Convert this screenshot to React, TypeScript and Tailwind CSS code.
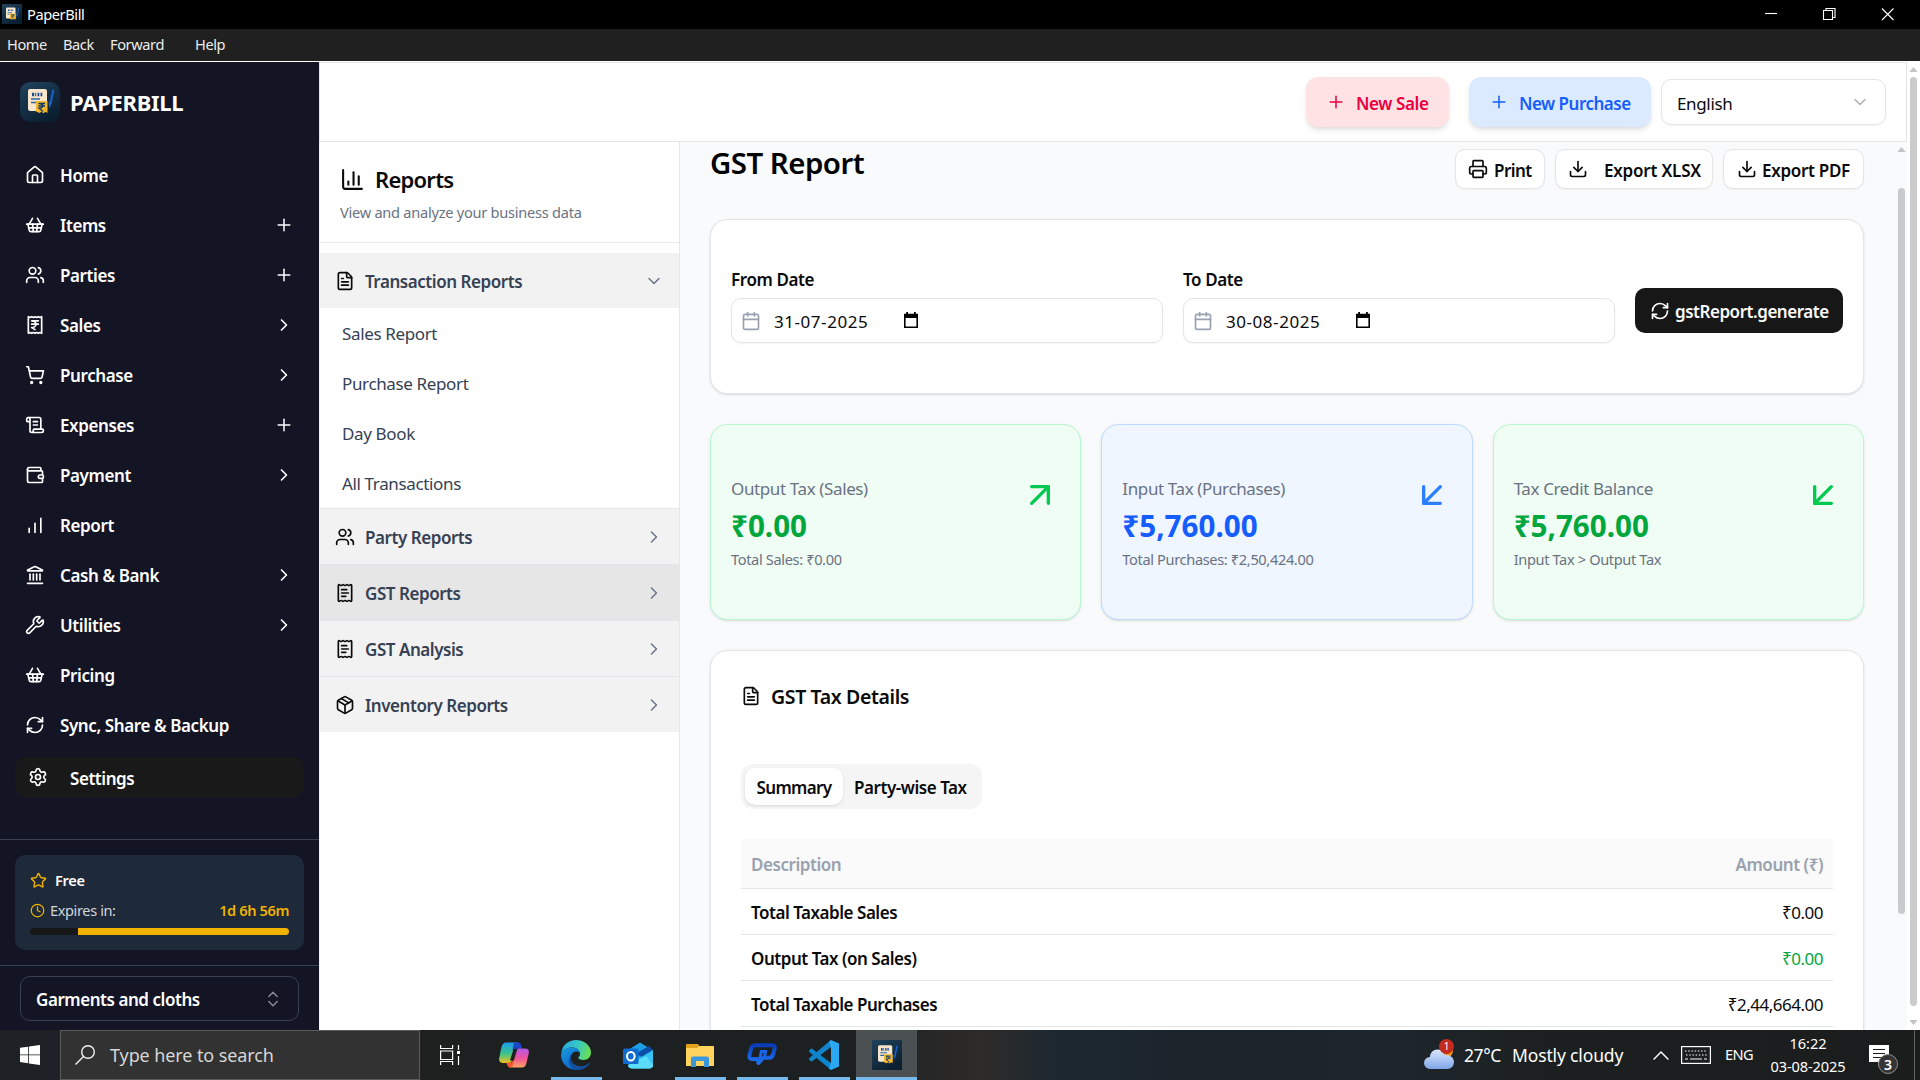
import type { ReactNode } from "react";
import {
  ArrowDownLeft,
  ArrowUpRight,
  Calendar,
  ChartColumn,
  ChevronDown,
  ChevronRight,
  ChevronsUpDown,
  Clock,
  Download,
  FileText,
  House,
  Landmark,
  Package,
  Plus,
  Printer,
  ReceiptIndianRupee,
  ReceiptText,
  RefreshCw,
  ScrollText,
  Settings,
  ShoppingBasket,
  ShoppingCart,
  Star,
  Users,
  Wallet,
  Wrench,
  type LucideIcon,
} from "lucide-react";

function BarsIcon() {
  return (
    <svg viewBox="0 0 24 24" className="size-5" fill="none" stroke="currentColor" strokeWidth="2" strokeLinecap="round">
      <path d="M5 21v-5M12 21V10M19 21V4" />
    </svg>
  );
}

function AppLogo({ className }: { className: string }) {
  return (
    <svg viewBox="0 0 40 40" className={className}>
      <defs>
        <linearGradient id="logoBg" x1="0" y1="0" x2="0.6" y2="1">
          <stop offset="0" stopColor="#21435c" />
          <stop offset="1" stopColor="#0a1f30" />
        </linearGradient>
      </defs>
      <rect width="40" height="40" fill="url(#logoBg)" />
      <path d="M10 7h15a2 2 0 0 1 2 2v20H10.500a2.500 2.500 0 0 1-2.500-2.500V9a2 2 0 0 1 2-2z" fill="#f7e6cb" />
      <path d="M12 12.500h2.200M15.200 12.500h1M17.500 12.500h1.800M20.500 12.500h1.800" stroke="#1d4f91" strokeWidth="3.400" />
      <path d="M11 17h9M11 20.500h5" stroke="#2a65ad" strokeWidth="1.400" />
      <path d="M32.500 7l1.800 1.500-2.600 13-2.600 5-.4-5.500z" fill="#1e5fc0" />
      <path d="M31.500 9l-2 11" stroke="#0c3170" strokeWidth="1" />
      <path d="M16 19h11.500v12l-2-1.200-2 1.400-2-1.400-2 1.200-3.500-1.500z" fill="#f4b62c" />
      <path d="M18.500 21.500h6.500M18.500 24h6.500M19 21.500c5 0 5 4.600 0 4.600l4 3.400" fill="none" stroke="#123a66" strokeWidth="1.300" />
    </svg>
  );
}

const nav: { label: string; icon: LucideIcon | typeof BarsIcon; end?: "plus" | "chevron" }[] = [
  { label: "Home", icon: House },
  { label: "Items", icon: ShoppingBasket, end: "plus" },
  { label: "Parties", icon: Users, end: "plus" },
  { label: "Sales", icon: ReceiptIndianRupee, end: "chevron" },
  { label: "Purchase", icon: ShoppingCart, end: "chevron" },
  { label: "Expenses", icon: ScrollText, end: "plus" },
  { label: "Payment", icon: Wallet, end: "chevron" },
  { label: "Report", icon: BarsIcon },
  { label: "Cash & Bank", icon: Landmark, end: "chevron" },
  { label: "Utilities", icon: Wrench, end: "chevron" },
  { label: "Pricing", icon: ShoppingBasket },
  { label: "Sync, Share & Backup", icon: RefreshCw },
];

function Sidebar() {
  return (
    <aside className="flex w-[319px] shrink-0 flex-col bg-[#131424] text-white">
      <div className="flex h-[88px] items-center gap-[10px] pt-5 pb-7 pl-5">
        <AppLogo className="size-10 rounded-[10px]" />
        <span className="text-[22px] font-bold tracking-[-0.3px]">PAPERBILL</span>
      </div>
      <nav className="flex h-[690px] flex-col">
        {nav.map(({ label, icon: Icon, end }) => (
          <div key={label} className="flex h-[50px] items-center pr-[25px] pl-[25px]">
            <Icon className="size-5" />
            <span className="ml-[15px] flex-1 pt-[2px] text-[17px] font-semibold tracking-[-0.4px]">{label}</span>
            {end === "plus" && <Plus className="size-5" strokeWidth={1.8} />}
            {end === "chevron" && <ChevronRight className="size-5" strokeWidth={2} />}
          </div>
        ))}
        <div className="mx-[15px] mt-[7px] flex h-10 items-center rounded-[10px] bg-[#191919] pl-[13px]">
          <Settings className="size-5" />
          <span className="ml-[22px] pt-[3px] text-[17px] font-semibold tracking-[-0.45px]">Settings</span>
        </div>
      </nav>
      <div className="mt-[-1px] h-[127px] border-y border-[#364153] px-[15px] pt-[15px]">
        <div className="h-[95px] rounded-[10px] bg-[#1e2939] px-[15px] pt-[13px]">
          <div className="flex h-[24px] items-center gap-[8px]">
            <Star className="size-[17px] text-[#f0b100]" />
            <span className="pt-[2px] text-[14.6px] font-semibold tracking-[-0.35px]">Free</span>
          </div>
          <div className="mt-[6px] flex h-6 items-center">
            <Clock className="size-[15px] text-[#f0b100]" />
            <span className="ml-[5px] flex-1 pt-[2px] text-[14.6px] tracking-[-0.4px] text-[#d1d5dc]">Expires in:</span>
            <span className="pt-[2px] text-[14.6px] font-semibold tracking-[-0.4px] text-[#f0b100]">1d 6h 56m</span>
          </div>
          <div className="mt-[6px] flex h-[7px] overflow-hidden rounded-full bg-[#171717]">
            <div className="ml-[48px] flex-1 bg-[#f0b100]" />
          </div>
        </div>
      </div>
      <div className="px-5 pt-[10px]">
        <div className="flex h-[45px] items-center justify-between rounded-[10px] border border-[#364153] pr-[15px] pl-[15px]">
          <span className="pt-[2px] text-[17px] font-semibold tracking-[-0.45px]">Garments and cloths</span>
          <ChevronsUpDown className="size-5 text-[#8b8c94]" strokeWidth={1.7} />
        </div>
      </div>
    </aside>
  );
}

function Header() {
  return (
    <header className="flex h-20 shrink-0 items-center justify-end border border-[#e5e5e5] bg-white pr-5">
      <button className="flex h-[50px] w-[143px] items-center rounded-[12px] bg-[#ffe2e4] pl-[20px] text-[#ec003f] shadow-md">
        <Plus className="size-5" strokeWidth={1.8} />
        <span className="ml-[10px] pt-[3px] text-[17px] font-semibold tracking-[-0.4px]">New Sale</span>
      </button>
      <button className="ml-5 flex h-[50px] w-[182px] items-center rounded-[12px] bg-[#dbeafe] pl-[20px] text-[#155dfc] shadow-md">
        <Plus className="size-5" strokeWidth={1.8} />
        <span className="ml-[10px] pt-[3px] text-[17px] font-semibold tracking-[-0.5px]">New Purchase</span>
      </button>
      <button className="ml-[10px] flex h-[46px] w-[225px] items-center justify-between rounded-[10px] border border-[#e5e5e5] bg-white pr-[15px] pl-[15px] text-[#0a0a0a] shadow-xs">
        <span className="pt-[3px] text-[17px] tracking-[-0.35px]">English</span>
        <ChevronDown className="size-5 text-[#b0b0b0]" strokeWidth={1.8} />
      </button>
    </header>
  );
}

function GroupRow({ icon: Icon, label, open, className }: { icon: LucideIcon; label: string; open?: boolean; className: string }) {
  const Arrow = open ? ChevronDown : ChevronRight;
  return (
    <div className={`flex items-center pr-[15px] pl-[15px] ${className}`}>
      <Icon className="size-5 text-[#0a0a0a]" />
      <span className="ml-[10px] flex-1 pt-[2px] text-[17px] font-semibold tracking-[-0.45px] text-[#364153]">{label}</span>
      <Arrow className="size-5 text-[#6a7282]" strokeWidth={1.7} />
    </div>
  );
}

function ReportsPanel() {
  return (
    <section className="w-[361px] shrink-0 border-r border-l border-r-[#e5e7eb] border-l-[#f2f2f2] bg-white">
      <div className="h-[101px] border-b border-[#e5e7eb] pl-5">
        <div className="flex items-center gap-[10px] pt-[23px]">
          <ChartColumn className="size-[25px] text-[#0a0a0a]" />
          <span className="-mt-px text-[22px] leading-[30px] font-semibold tracking-[-0.75px] text-[#0a0a0a]">Reports</span>
        </div>
        <p className="mt-[8px] text-[14.6px] leading-5 tracking-[-0.26px] text-[#6a7282]">View and analyze your business data</p>
      </div>
      <GroupRow icon={FileText} label="Transaction Reports" open className="mt-[10px] h-[55px] bg-[#f2f2f2]" />
      <div className="h-[200px]">
        {["Sales Report", "Purchase Report", "Day Book", "All Transactions"].map((t) => (
          <div key={t} className="flex h-[50px] items-center pt-[2px] pl-[22px] text-[17px] tracking-[-0.36px] text-[#364153]">
            {t}
          </div>
        ))}
      </div>
      <GroupRow icon={Users} label="Party Reports" className="h-14 border-t border-[#e5e7eb] bg-[#f2f2f2]" />
      <GroupRow icon={ReceiptText} label="GST Reports" className="h-14 border-t border-[#e5e7eb] bg-[#e6e6e6]" />
      <GroupRow icon={ReceiptText} label="GST Analysis" className="h-14 border-t border-[#e5e7eb] bg-[#f2f2f2]" />
      <GroupRow icon={Package} label="Inventory Reports" className="h-14 border-t border-[#e5e7eb] bg-[#f2f2f2]" />
    </section>
  );
}

function OutlineButton({ icon: Icon, children, className }: { icon: LucideIcon; children: ReactNode; className: string }) {
  return (
    <button className={`flex h-10 items-center rounded-[10px] border border-[#e5e5e5] bg-white text-[17px] font-semibold text-[#0a0a0a] shadow-xs ${className}`}>
      <Icon className="size-5" />
      <span className="pt-[3px]">{children}</span>
    </button>
  );
}

function DateGlyph() {
  return (
    <svg viewBox="0 0 14 16" className="-mt-[2px] h-4 w-[14px]">
      <path d="M0.8 3.5h12.400v11.700H.8z" fill="none" stroke="#000" strokeWidth="1.600" />
      <path d="M0 1.700h14V6H0zM2.200 0h1.800v2H2.200zM10 0h1.800v2H10z" fill="#000" />
    </svg>
  );
}

function DateField({ label, value }: { label: string; value: string }) {
  return (
    <div className="w-[432px]">
      <div className="text-[17px] leading-[26px] font-semibold tracking-[-0.4px] text-[#0a0a0a]">{label}</div>
      <div className="mt-[5px] flex h-[45px] items-center rounded-[10px] border border-[#e5e5e5] pl-[9px] shadow-xs">
        <Calendar className="size-5 text-[#99a1af]" />
        <span className="ml-[13px] w-[130px] pt-[2px] text-[17px] tracking-[0.55px] text-[#0a0a0a]">{value}</span>
        <DateGlyph />
      </div>
    </div>
  );
}

function StatCard({ label, value, note, icon: Icon, card, valueColor, iconColor }: {
  label: string; value: string; note: string; icon: LucideIcon; card: string; valueColor: string; iconColor: string;
}) {
  return (
    <div className={`flex h-[196px] items-start justify-between rounded-[17.5px] border pt-[50px] pr-[20px] pl-5 shadow-sm ${card}`}>
      <div>
        <div className="mt-px text-[17px] leading-[26px] tracking-[-0.38px] text-[#6a7282]">{label}</div>
        <div className={`mt-[4px] text-[29.6px] leading-[40px] font-bold ${valueColor}`}>{value}</div>
        <div className="mt-[3px] text-[14.6px] leading-5 tracking-[-0.36px] text-[#6a7282]">{note}</div>
      </div>
      <Icon className={`size-10 ${iconColor}`} />
    </div>
  );
}

const rows = [
  { name: "Total Taxable Sales", amount: "₹0.00", color: "text-[#0a0a0a]" },
  { name: "Output Tax (on Sales)", amount: "₹0.00", color: "text-[#00a63e]" },
  { name: "Total Taxable Purchases", amount: "₹2,44,664.00", color: "text-[#0a0a0a]" },
];

function Report() {
  return (
    <main className="h-full flex-1 overflow-hidden bg-[#f9fafb] pr-[43px] pl-[30px]">
      <div className="flex h-[77px] justify-between pt-[7px]">
        <h1 className="-mt-px text-[29.4px] leading-[30px] font-semibold tracking-[-0.5px] text-black">GST Report</h1>
        <div className="flex gap-[10px]">
          <OutlineButton icon={Printer} className="w-[90px] gap-[6px] pl-[12px] tracking-[-0.55px]">Print</OutlineButton>
          <OutlineButton icon={Download} className="w-[158px] gap-[16px] pl-[12px] tracking-[-0.2px]">Export XLSX</OutlineButton>
          <OutlineButton icon={Download} className="w-[141px] gap-[5px] pl-[13px] tracking-[-0.3px]">Export PDF</OutlineButton>
        </div>
      </div>
      <div className="flex h-[175px] gap-5 rounded-[17.5px] border border-[#e5e5e5] bg-white pt-[47px] pl-5 shadow-sm">
        <DateField label="From Date" value="31-07-2025" />
        <DateField label="To Date" value="30-08-2025" />
        <button className="mt-[21px] flex h-[45px] w-[208px] items-center gap-[5px] rounded-[10px] bg-[#171717] pl-[15px] text-[17px] font-semibold tracking-[-0.47px] text-[#fafafa]">
          <RefreshCw className="size-5" />
          <span className="pt-[2px]">gstReport.generate</span>
        </button>
      </div>
      <div className="mt-[30px] grid grid-cols-3 gap-5">
        <StatCard label="Output Tax (Sales)" value="₹0.00" note="Total Sales: ₹0.00" icon={ArrowUpRight} card="border-[#b9f8cf] bg-[#f0fdf4]" valueColor="text-[#00a63e]" iconColor="text-[#00c950]" />
        <StatCard label="Input Tax (Purchases)" value="₹5,760.00" note="Total Purchases: ₹2,50,424.00" icon={ArrowDownLeft} card="border-[#bedbff] bg-[#eff6ff]" valueColor="text-[#155dfc]" iconColor="text-[#2b7fff]" />
        <StatCard label="Tax Credit Balance" value="₹5,760.00" note="Input Tax > Output Tax" icon={ArrowDownLeft} card="border-[#b9f8cf] bg-[#f0fdf4]" valueColor="text-[#00a63e]" iconColor="text-[#00c950]" />
      </div>
      <div className="mt-[30px] h-[560px] rounded-[17.5px] border border-[#e5e5e5] bg-white px-[30px] pt-[30px] shadow-sm">
        <div className="flex h-[30px] items-center gap-[10px]">
          <FileText className="size-5 text-[#0a0a0a]" />
          <span className="pt-[2px] text-[19.5px] font-semibold tracking-[-0.37px] text-[#0a0a0a]">GST Tax Details</span>
        </div>
        <div className="mt-[53px] flex h-[45px] w-[241px] items-center rounded-[12px] bg-[#f5f5f5] pl-1 text-[17px] font-semibold text-[#0a0a0a]">
          <div className="flex h-[37px] w-[98px] items-center justify-center rounded-[10px] bg-white pt-[2px] tracking-[-0.65px] shadow-sm">Summary</div>
          <div className="flex-1 pt-[2px] pl-[11px] tracking-[-0.45px]">Party-wise Tax</div>
        </div>
        <div className="mt-[30px] flex h-[50px] items-center justify-between border-b border-[#e5e5e5] bg-[#fafafa] px-[10px] pt-[2px] text-[17px] font-semibold tracking-[-0.45px] text-[#99a1af]">
          <span>Description</span>
          <span>Amount (₹)</span>
        </div>
        {rows.map((r) => (
          <div key={r.name} className="flex h-[46px] items-center justify-between border-b border-[#e5e5e5] px-[10px] pt-[2px] text-[17px]">
            <span className="font-semibold tracking-[-0.47px] text-[#0a0a0a]">{r.name}</span>
            <span className={`tracking-[-0.5px] ${r.color}`}>{r.amount}</span>
          </div>
        ))}
      </div>
    </main>
  );
}

function ScrollArrow({ down }: { down?: boolean }) {
  return (
    <svg viewBox="0 0 10 6" className="h-[5px] w-[9px]">
      <path d={down ? "M0 0h10L5 6z" : "M0 6h10L5 0z"} fill="#c4c4c4" />
    </svg>
  );
}

function CopilotIcon() {
  return (
    <svg viewBox="0 0 30 26" className="h-[26px] w-[30px]">
      <defs>
        <linearGradient id="cpA" x1="0" y1="0" x2="0" y2="1">
          <stop offset="0" stopColor="#1b9df0" />
          <stop offset=".55" stopColor="#3cc38a" />
          <stop offset="1" stopColor="#f0c31c" />
        </linearGradient>
        <linearGradient id="cpB" x1="0" y1="0" x2="0" y2="1">
          <stop offset="0" stopColor="#b05ae8" />
          <stop offset=".5" stopColor="#f0529c" />
          <stop offset="1" stopColor="#ffa25e" />
        </linearGradient>
      </defs>
      <path d="M7 .5h12L12.500 19.500c-.6 1.500-1.200 1.500-2.500 1.500H4c-3 0-4.500-2-3.700-5.500L2.500 5C3.300 2 4.800.5 7 .5z" fill="url(#cpA)" />
      <path d="M15 .5h4.500c1.700 0 2.400 1.200 2.900 3.500l.8 2.500h-4.500c-1.700 0-2.300.8-2.900 3L13.500 8z" fill="#1b45c4" />
      <path d="M23 25.500H11l6.500-17c.6-1.500 1.200-2 2.500-2h6c3 0 4.500 1.500 3.700 5L27.500 21c-.8 3-2.300 4.500-4.500 4.500z" fill="url(#cpB)" />
      <path d="M7 20.500h4.500c1.700 0 2.300-.8 2.900-3L17 12l-3.500 12c-.5 1.200-1.200 1.500-2.500 1.500-1.700 0-2.300-1.200-2.900-3z" fill="#ee5a2e" />
      <path d="M14.500 7h3.800L14.800 18.500H11z" fill="#1c2020" />
    </svg>
  );
}

function EdgeIcon() {
  return (
    <svg viewBox="0 0 30 30" className="size-[30px]">
      <defs>
        <linearGradient id="edA" x1="0" y1=".3" x2="1" y2=".5">
          <stop offset="0" stopColor="#2aa9e0" />
          <stop offset=".5" stopColor="#34c6c6" />
          <stop offset="1" stopColor="#6be053" />
        </linearGradient>
        <linearGradient id="edB" x1="0" y1="0" x2=".6" y2="1">
          <stop offset="0" stopColor="#1b9de2" />
          <stop offset="1" stopColor="#0b62c4" />
        </linearGradient>
      </defs>
      <path d="M.3 13C1.300 5 7.500 0 15 0c8.500 0 15 6 15 12.500 0 4.500-3.300 7.500-7.500 7.500-3.400 0-5.200-1.200-5.200-2.200 0-.8 1.700-1.300 1.700-4C19 10 15.500 7.500 11 7.500 6 7.500 1.500 10 .3 13z" fill="url(#edA)" />
      <path d="M.1 14.500C.5 10.500 5 7.500 10.500 7.500c4.500 0 8 2 8.400 5.500-1-1.200-2.600-1.800-4-1.500-3.500.6-6 4-5.400 8.500.5 4.500 4 8.500 8.500 9.600-9.500 1.900-18.400-5.600-17.900-15.100z" fill="url(#edB)" />
      <path d="M11 14c-2.500 4.500-.5 10.500 6.500 12 4.500.9 8.500-.8 10.800-3 .6-.5 1 0 .6.600C26 28 21 30.200 16.500 30c-6-.8-9.500-6.500-8.500-11 .4-2.200 1.500-4 3-5z" fill="#124f9c" />
    </svg>
  );
}

function OutlookIcon() {
  return (
    <svg viewBox="0 0 31 27" className="h-[27px] w-[31px]">
      <path d="M5 8L17 .5l12 7.500v9L8 20z" fill="#1ea0e6" />
      <path d="M12 12L26 4l4 4-8 8z" fill="#0c4ea6" />
      <path d="M30 8v15c0 2-1.500 3.500-3.500 3.500H9c-2 0-4-1.500-4-3.500z" fill="#35c3f3" />
      <path d="M5 23l18-9 7 9c0 2-1.500 3.500-3.500 3.500H9c-2.500 0-4-1.500-4-3.500z" fill="#5adcf8" />
      <rect y="6.500" width="15.500" height="15.500" rx="1.500" fill="#0f6cce" />
      <ellipse cx="7.800" cy="14.300" rx="3.800" ry="4.300" fill="none" stroke="#fff" strokeWidth="2" />
    </svg>
  );
}

function ExplorerIcon() {
  return (
    <svg viewBox="0 0 28 23" className="h-[23px] w-[28px]">
      <path d="M0 1a1 1 0 0 1 1-1h11l2 3-2 3H0z" fill="#e3a21a" />
      <path d="M13 2h14a1 1 0 0 1 1 1v19H0V4h11z" fill="#ffd45e" />
      <path d="M5 14.500a2 2 0 0 1 2-2h14a2 2 0 0 1 2 2V23h-5v-6h-8v6H5z" fill="#3b97dc" />
    </svg>
  );
}

function ChatIcon() {
  return (
    <svg viewBox="0 0 30 24" className="h-6 w-[30px]">
      <defs>
        <linearGradient id="chA" x1="0" y1="0" x2="0" y2="1">
          <stop offset="0" stopColor="#0a3bb8" />
          <stop offset="1" stopColor="#1c74f2" />
        </linearGradient>
      </defs>
      <path d="M11 16H5c-2 0-3-1.300-2.600-3.200L4 6c.6-2.500 2-3.800 4.500-3.800H25c2.300 0 3.200 1.200 2.700 3.200L26.200 11c-.6 2.500-2 3.800-4.300 3.800H16L11.500 20z" fill="none" stroke="url(#chA)" strokeWidth="4" strokeLinejoin="round" />
      <path d="M12.500 18l1.800-9.500h4.200l-1 6" fill="none" stroke="#1a66ea" strokeWidth="3" />
    </svg>
  );
}

function CodeIcon() {
  return (
    <svg viewBox="0 0 30 30" className="size-[30px]">
      <path d="M0 10.500L2.500 8.300 22 23v7L.4 12z" fill="#0a86cf" />
      <path d="M0 19.500l2.500 2.200L22 7V0L.4 18z" fill="#1184cc" />
      <path d="M22 0l8 3.500v23L22 30l-2-1.500L22 22V8l-2-6z" fill="#2aa9f2" />
    </svg>
  );
}

function TaskbarApp({ children, running, active }: { children: ReactNode; running?: boolean; active?: boolean }) {
  return (
    <div className={`relative flex h-full shrink-0 items-center justify-center ${active ? "ml-px w-[61px] bg-[#4b5052]" : "w-[62px]"}`}>
      {children}
      {running && <div className={`absolute bottom-0 h-[3px] bg-[#76b9ed] ${active ? "inset-x-0" : "inset-x-[5.500px]"}`} />}
    </div>
  );
}

function Taskbar() {
  return (
    <footer className="flex h-[50px] shrink-0 items-center bg-[linear-gradient(90deg,#1e2227_0px,#1e2227_60px,#1e2020_440px,#1c2022_860px,#2e2b29_980px,#1c2830_1060px,#1c242b_1200px,#1d262c_1400px,#1c1f20_1550px,#1b1d1d_1920px)] text-white">
      <div className="flex w-[60px] justify-center">
        <svg viewBox="0 0 20 20" className="size-5">
          <path d="M0 2.800l8.200-1.100v7.800H0zM9 1.600L20 0v9.500H9zM0 10.300h8.200v7.900L0 17.100zM9 10.300h11V20L9 18.400z" fill="#fff" />
        </svg>
      </div>
      <div className="flex h-full w-[360px] items-center border border-[#5b5b5b] bg-[#323232] pl-[14px]">
        <svg viewBox="0 0 20 20" className="size-5" fill="none" stroke="#f0f0f0" strokeWidth="1.400">
          <circle cx="13" cy="7" r="6.300" />
          <path d="M8.500 11.500L.5 19.500" />
        </svg>
        <span className="ml-[15px] text-[18px] tracking-[-0.1px] text-[#d6d6d6]">Type here to search</span>
      </div>
      <div className="ml-[20px] w-[20px]">
        <svg viewBox="0 0 20 20" className="size-5" fill="none" stroke="#fff" strokeWidth="1.200">
          <path d="M.6 0v3.500h12V0M.6 6h12v8.500H.6zM.6 20v-3.500h12V20M18.500 0v5M18.500 11v9" />
          <path d="M17 6h3v3h-3z" fill="#fff" stroke="none" />
        </svg>
      </div>
      <div className="ml-[23px] flex h-full">
        <TaskbarApp><CopilotIcon /></TaskbarApp>
        <TaskbarApp running><EdgeIcon /></TaskbarApp>
        <TaskbarApp><OutlookIcon /></TaskbarApp>
        <TaskbarApp running><ExplorerIcon /></TaskbarApp>
        <TaskbarApp running><ChatIcon /></TaskbarApp>
        <TaskbarApp running><CodeIcon /></TaskbarApp>
        <TaskbarApp running active><AppLogo className="size-[30px]" /></TaskbarApp>
      </div>
      <div className="ml-auto flex h-full items-center">
        <div className="relative h-[30px] w-[30px]">
          <svg viewBox="0 0 30 30" className="size-[30px]">
            <defs>
              <linearGradient id="cloud" x1="0" y1="0" x2="0" y2="1">
                <stop offset="0" stopColor="#dbe7fb" />
                <stop offset="1" stopColor="#7fa6ea" />
              </linearGradient>
            </defs>
            <circle cx="23" cy="11" r="6" fill="#f09a1c" />
            <path d="M6 29a6 6 0 0 1 0-12c0-4.500 3.500-7.500 7.500-7.500 3.500 0 6.300 2 7.300 5.500 5-.8 9.200 2.500 9.200 7 0 4-3 7-6.500 7z" fill="url(#cloud)" />
          </svg>
          <div className="absolute -top-px right-0 flex size-[15px] items-center justify-center rounded-full bg-[#c42b1c] text-[10px]">1</div>
        </div>
        <span className="ml-[10px] w-[48px] text-[17.5px] tracking-[-0.4px]">27°C</span>
        <span className="w-[141px] text-[17.5px] tracking-[-0.15px]">Mostly cloudy</span>
        <svg viewBox="0 0 16 9" className="h-[9px] w-4" fill="none" stroke="#fff" strokeWidth="1.400">
          <path d="M.6 8.400L8 1l7.400 7.400" />
        </svg>
        <svg viewBox="0 0 30 18" className="ml-[12px] h-[18px] w-[30px]" fill="none" stroke="#fff" strokeWidth="1.200">
          <rect x=".6" y=".6" width="28.800" height="16.800" />
          <path d="M4 5h22M5 9h21" strokeDasharray="1.500 1.700" />
          <path d="M4 13h3M9 13h12M23 13h3" />
        </svg>
        <span className="ml-[14px] w-[45px] text-[14.600px] tracking-[-0.6px]">ENG</span>
        <div className="w-[76px] text-center text-[14.600px] leading-[23px] tracking-[-0.1px] whitespace-nowrap">
          <div>16:22</div>
          <div>03-08-2025</div>
        </div>
        <div className="relative ml-[23px] h-[30px] w-[31px]">
          <svg viewBox="0 0 31 30" className="h-[30px] w-[31px]">
            <path d="M0 5h20v17h-7l-4 4v-4H0z" fill="#fff" />
            <path d="M4 9.500h12M4 13.500h12M4 17.500h9" stroke="#1b1d1d" strokeWidth="1.200" />
          </svg>
          <div className="absolute top-[14px] left-[9px] flex size-5 items-center justify-center rounded-full border border-[#8a8a8a] bg-[#353535] text-[14px] font-semibold">3</div>
        </div>
        <div className="ml-[14px] h-full w-[6px] border-l border-[#5f6161]" />
      </div>
    </footer>
  );
}

export default function App() {
  return (
    <div className="flex h-[1080px] w-[1920px] flex-col overflow-hidden bg-white font-['Noto_Sans','Open_Sans',sans-serif]">
      <div className="flex h-[29px] shrink-0 items-center justify-between bg-black text-white">
        <div className="flex items-center pl-[2px]">
          <AppLogo className="size-5" />
          <span className="ml-[5px] text-[14.600px] tracking-[-0.4px]">PaperBill</span>
        </div>
        <svg viewBox="0 0 155 29" className="h-[29px] w-[155px]" fill="none" stroke="#fff" strokeWidth="1.100">
          <path d="M0 13.500h12" />
          <path d="M58.500 10.500h9v9h-9zM61 10.500v-2h9v9h-2.500" />
          <path d="M117 8.500l11.500 11.500M128.500 8.500L117 20" />
        </svg>
      </div>
      <div className="flex h-8 shrink-0 items-center bg-[#202020] pl-[7px] text-[14.600px] tracking-[-0.4px] text-[#ececec]">
        <span className="w-[56px]">Home</span>
        <span className="w-[47px]">Back</span>
        <span className="w-[85px]">Forward</span>
        <span>Help</span>
      </div>
      <div className="mt-px flex h-[968px] shrink-0">
        <Sidebar />
        <div className="flex w-[1588px] flex-col">
          <Header />
          <div className="flex h-[888px]">
            <ReportsPanel />
            <Report />
            <div className="-ml-[11px] flex w-[11px] flex-col items-center pt-[5px]">
              <ScrollArrow />
              <div className="mt-[36px] -ml-px h-[726px] w-[7px] rounded-full bg-[#c9cacb]" />
            </div>
          </div>
        </div>
        <div className="flex w-[13px] flex-col items-center bg-white pt-[5px]">
          <ScrollArrow />
          <div className="mt-[5px] h-[929px] w-[7px] rounded-full bg-[#cbcbcb]" />
          <div className="mt-[14px] flex"><ScrollArrow down /></div>
        </div>
      </div>
      <Taskbar />
    </div>
  );
}
